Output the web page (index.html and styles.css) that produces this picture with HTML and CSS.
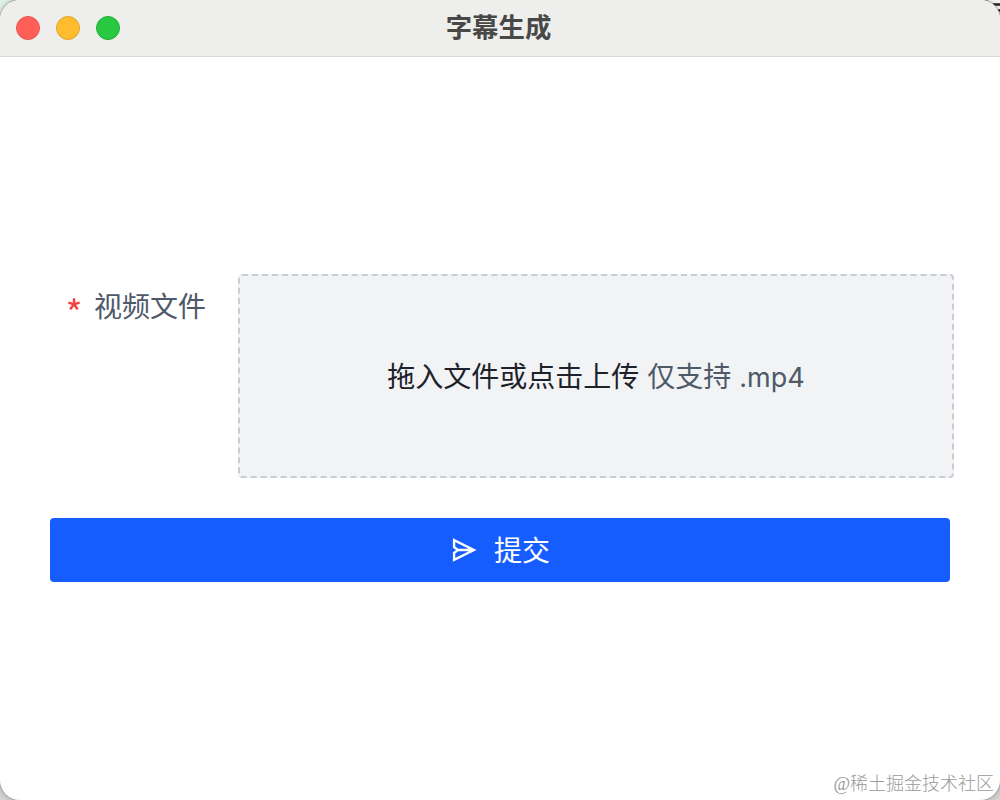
FILE: index.html
```html
<!DOCTYPE html>
<html lang="zh-CN">
<head>
  <meta charset="UTF-8">
  <meta name="viewport" content="width=device-width,initial-scale=1.0">
  <title>字幕生成</title>
  <link rel="stylesheet" href="styles.css">
</head>
<body>
  <div class="backdrop">
    <svg class="backdrop-lines" width="24" height="24" viewBox="0 0 24 24">
      <path d="M8 0.5h4M12 4.5h12M18 10.5h6" stroke="#222" stroke-width="2.5" fill="none"/>
    </svg>
    <div class="window">
      <header class="titlebar">
        <div class="lights">
          <span class="light close"></span>
          <span class="light minimize"></span>
          <span class="light zoom"></span>
        </div>
        <h1 class="title">字幕生成</h1>
      </header>

      <main class="content">
        <form class="form">
          <div class="form-item">
            <label class="label">
              <svg class="required" width="12" height="12" viewBox="0 0 1024 1024" fill="currentColor">
                <path d="M583.338667 17.066667c18.773333 0 34.133333 15.36 34.133333 34.133333v349.013333l313.344-101.888a34.133333 34.133333 0 0 1 43.008 22.016l42.154667 129.706667a34.133333 34.133333 0 0 1-21.845334 43.178667l-315.733333 102.4 208.896 287.744a34.133333 34.133333 0 0 1-7.509333 47.786666l-110.421334 80.213334a34.133333 34.133333 0 0 1-47.786666-7.509334L505.685333 706.218667 288.426667 1005.226667a34.133333 34.133333 0 0 1-47.786667 7.509333l-110.421333-80.213333a34.133333 34.133333 0 0 1-7.509334-47.786667l214.186667-295.253333L29.013333 489.813333a34.133333 34.133333 0 0 1-22.016-43.008l42.154667-129.877333a34.133333 34.133333 0 0 1 43.008-22.016l320.512 104.106667L412.672 51.2c0-18.773333 15.36-34.133333 34.133333-34.133333h136.533334z"/>
              </svg>
              <span>视频文件</span>
            </label>
            <div class="dropzone">
              <span class="drop-text">拖入文件或点击上传</span>
              <span class="drop-tip">仅支持 <span class="ext">.mp4</span></span>
            </div>
          </div>
          <button class="submit" type="button">
            <svg class="send" width="28" height="28" viewBox="0 0 48 48" fill="none" stroke="currentColor" stroke-width="4">
              <path d="m14 24-7-5V7l34 17L7 41V29l7-5Zm0 0h25"/>
            </svg>
            <span>提交</span>
          </button>
        </form>
      </main>
    </div>
    <div class="watermark">@稀土掘金技术社区</div>
  </div>
</body>
</html>
```

FILE: styles.css
```css
* { box-sizing:border-box; }
body { margin:0; font-family:Inter,"Noto Sans CJK SC",sans-serif; font-size:28px; color:#1d2129; }
.backdrop { position:relative; width:1000px; height:800px; overflow:hidden;
            background:linear-gradient(#dff0e4 0,#dff0e4 30px,#d2d2d2 60px); }
.backdrop-lines { position:absolute; top:0; right:0; background:#f4f4f4; }
.window { position:relative; display:flex; flex-direction:column; height:800px; overflow:hidden;
          background:#fff; border-radius:20px; box-shadow:0 0 0 1px #aaa, 0 0 5px rgba(0,0,0,.3); }

.titlebar { position:relative; display:flex; align-items:center; justify-content:center; flex:none;
            height:57px; padding:0 3px 2px 0; background:#eeeeed; border-bottom:1px solid #dadada; }
.lights { position:absolute; left:16px; top:16px; display:flex; gap:16px; }
.light { width:24px; height:24px; border-radius:50%; border:1px solid; }
.close { background:#ff5f57; border-color:#e6564f; }
.minimize { background:#febc2e; border-color:#e0a32b; }
.zoom { background:#28c840; border-color:#25ad38; }
.title { margin:0; font-size:26.4px; line-height:36px; font-weight:700; color:#484847; }

.content { display:flex; align-items:center; flex:1; padding:0 50px; }
.form { width:100%; margin-bottom:1px; }
.form-item { display:flex; margin:0 -4px 40px 0; }
.label { display:flex; align-items:center; gap:14px; width:188px; height:64px; padding:0 0 2px 18px; color:#4e5969; }
.required { margin-bottom:2px; color:#f53f3f; }
.dropzone { display:flex; align-items:center; justify-content:center; gap:8px; flex:1; height:204px;
            padding-bottom:2px; background:#f2f3f5; border:2px dashed #c9cdd4; border-radius:4px; }
.drop-tip { color:#4e5969; }
.ext { font-family:Inter,sans-serif; font-size:27px; }
.submit { display:flex; align-items:center; justify-content:center; gap:16px; width:100%; height:64px;
          padding:0; background:#165dff; border:none; border-radius:4px; color:#fff; font:inherit; cursor:pointer; }
.submit span { padding-bottom:2px; }

.watermark { position:absolute; right:6px; bottom:3px; font-family:"Liberation Serif","Noto Sans CJK SC",serif;
             font-size:18px; line-height:26px; font-weight:300; color:#999; }
```
